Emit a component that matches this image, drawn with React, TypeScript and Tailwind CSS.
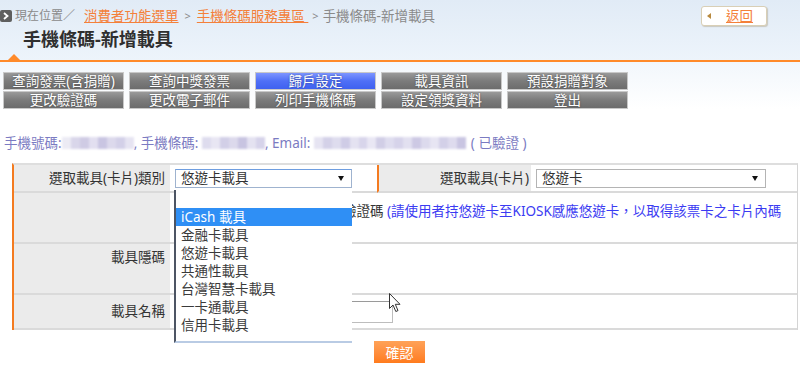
import React from "react";

const blur1 = ["bg-[#ecebf4]", "bg-[#d9d6ea]", "bg-[#cfcbe4]", "bg-[#e2dff0]", "bg-[#c9c5e2]", "bg-[#dcd9ec]", "bg-[#d3d0e8]", "bg-[#e6e4f2]"];
const blur2 = ["bg-[#dedcee]", "bg-[#e8e6f3]", "bg-[#d2cfe7]", "bg-[#dcd9ec]", "bg-[#c8c4e1]", "bg-[#e4e2f1]", "bg-[#d6d3ea]"];
const blur3 = ["bg-[#e6e4f2]", "bg-[#d4d1e8]", "bg-[#dedcee]", "bg-[#cfcce6]", "bg-[#e4e2f1]", "bg-[#d8d5eb]", "bg-[#e9e7f4]", "bg-[#d1cee6]", "bg-[#dfddef]", "bg-[#d6d3ea]", "bg-[#e2e0f0]", "bg-[#cdc9e4]", "bg-[#dcdaed]", "bg-[#e7e5f3]", "bg-[#d3d0e8]", "bg-[#dedbee]", "bg-[#c9c5e2]"];

function Blur({ cells, w }: { cells: string[]; w: string }) {
  return (
    <span className={`inline-flex h-[12px] blur-[1px] align-middle ${w}`}>
      {cells.map((c, i) => (
        <span key={i} className={`flex-1 h-full ${c}`} />
      ))}
    </span>
  );
}

const buttons = [
  "查詢發票(含捐贈)",
  "查詢中獎發票",
  "歸戶設定",
  "載具資訊",
  "預設捐贈對象",
  "更改驗證碼",
  "更改電子郵件",
  "列印手機條碼",
  "設定領獎資料",
  "登出",
];

const options = ["iCash 載具", "金融卡載具", "悠遊卡載具", "共通性載具", "台灣智慧卡載具", "一卡通載具", "信用卡載具"];

function Arrow() {
  return <span className="w-0 h-0 border-x-[3.5px] border-x-transparent border-t-[5px] border-t-[#111]" />;
}

export default function App() {
  return (
    <div className="relative w-[800px] h-[371px] overflow-hidden bg-white font-['Noto_Sans','Noto_Sans_CJK_TC',sans-serif] text-[13.5px] text-[#333]">
      {/* header */}
      <div className="relative h-[60px] bg-gradient-to-b from-[#e1ebf6] to-[#edf4fb]">
        <div className="flex items-center justify-between h-[26px] pt-[6px] pr-[33px]">
          <div className="flex items-center leading-[16px] text-[#8a8a8a]">
            <span className="flex items-center justify-center w-[12px] h-[12px] rounded-[2px] bg-[#5f5f5f] mr-[3px]">
              <svg width="6" height="8" viewBox="0 0 6 8">
                <path d="M1 1 L4.5 4 L1 7" stroke="#fff" strokeWidth="1.8" fill="none" />
              </svg>
            </span>
            <span className="text-[12px]">現在位置／</span>
            <span className="ml-[9px] text-[#f4803a] underline decoration-[#f4803a]">消費者功能選單</span>
            <span className="mx-[6px] text-[11px]">&gt;</span>
            <span className="text-[#f4803a] underline decoration-[#f4803a]">手機條碼服務專區&nbsp;</span>
            <span className="ml-[4px] mr-[4px] text-[11px]">&gt;</span>
            <span>手機條碼-新增載具</span>
          </div>
          <div className="flex items-center w-[66px] h-[20px] bg-white border border-[#d9cfb6] rounded-[3px] shadow-[1px_1px_1px_rgba(150,130,90,0.35)] pl-[5px]">
            <span className="w-0 h-0 border-y-[3px] border-y-transparent border-r-[4px] border-r-[#b8893e]" />
            <span className="ml-[15px] text-[#f4803a] underline decoration-[#f4803a] leading-[16px]">返回</span>
          </div>
        </div>
        <div className="pl-[23px] mt-[3px] text-[18px] font-bold leading-[20px] text-[#2f2f2f]">手機條碼-新增載具</div>
        <span className="absolute left-[8px] bottom-0 w-0 h-0 border-x-[6px] border-x-transparent border-b-[6px] border-b-[#ff8a2a]" />
      </div>
      <div className="h-[2px] bg-[#ff8a2a]" />

      {/* nav buttons */}
      <div className="bg-gradient-to-b from-[#f2f7fc] to-white pt-[10px] pl-[3px]">
        <div className="grid grid-cols-[repeat(5,121px)] gap-x-[5px] gap-y-[1px]">
          {buttons.map((b) => (
            <div
              key={b}
              className={`h-[18px] flex items-center justify-center text-white leading-[16px] border border-[#c8c8c8] [text-shadow:0_0_2px_rgba(0,0,0,0.45)] ${
                b === "歸戶設定"
                  ? "bg-gradient-to-b from-[#7d95ff] via-[#4f6ff6] to-[#3f61f0]"
                  : "bg-gradient-to-b from-[#9a9a9a] via-[#7b7b7b] to-[#6c6c6c]"
              }`}
            >
              {b}
            </div>
          ))}
        </div>
      </div>

      {/* info */}
      <div className="mt-[26px] pl-[4px] h-[16px] leading-[16px] flex items-center text-[#7b7bc2] whitespace-nowrap">
        <span>手機號碼:</span>
        <Blur cells={blur1} w="w-[72px]" />
        <span>, 手機條碼:&nbsp;</span>
        <Blur cells={blur2} w="w-[63px]" />
        <span>, Email:&nbsp;</span>
        <Blur cells={blur3} w="w-[152px]" />
        <span className="ml-[5px]">( 已驗證 )</span>
      </div>

      {/* table */}
      <div className="relative mt-[12px] ml-[12px] w-[786px] border-l-2 border-l-[#f47b20] border-t-2 border-t-[#dedede] border-r border-r-[#d4d4d4] grid grid-cols-[156px_207px_154px_1fr]">
        {/* row 1 */}
        <div className="h-[28px] bg-[#ebebeb] border-b-2 border-b-[#dadada] flex items-center justify-end pr-[5px]">選取載具(卡片)類別</div>
        <div className="h-[28px] border-b-2 border-b-[#dadada] flex items-center pl-[5px]">
          <div className="w-[177px] h-[19px] border border-[#9fb3cf] border-t-[#6f9ee0] flex items-center justify-between pl-[5px] pr-[7px] bg-white">
            <span className="leading-[16px]">悠遊卡載具</span>
            <Arrow />
          </div>
        </div>
        <div className="h-[28px] bg-[#ebebeb] border-l-2 border-l-[#f47b20] border-b-2 border-b-[#dadada] flex items-center justify-end pr-[2px]">選取載具(卡片)</div>
        <div className="h-[28px] border-b-2 border-b-[#dadada] flex items-center pl-[5px]">
          <div className="w-[230px] h-[19px] border border-[#b4b4b4] flex items-center justify-between pl-[5px] pr-[7px] bg-white">
            <span className="leading-[16px]">悠遊卡</span>
            <Arrow />
          </div>
        </div>

        {/* row 2 */}
        <div className="h-[51px] bg-[#ebebeb] border-b-2 border-b-[#dadada]" />
        <div className="col-span-3 h-[51px] border-b-2 border-b-[#dadada] pl-[173px] pt-[9px] leading-[18px] whitespace-nowrap">
          <span>驗證碼 </span>
          <span className="text-[#3b3bf2]">(請使用者持悠遊卡至KIOSK感應悠遊卡，以取得該票卡之卡片內碼</span>
        </div>

        {/* row 3 */}
        <div className="h-[51px] bg-[#ebebeb] border-b-2 border-b-[#dadada] flex items-start justify-end pr-[5px] pt-[5px] leading-[16px]">載具隱碼</div>
        <div className="col-span-3 h-[51px] border-b-2 border-b-[#dadada]" />

        {/* row 4 */}
        <div className="h-[35px] bg-[#ebebeb] border-b-2 border-b-[#dadada] flex items-center justify-end pr-[5px]">載具名稱</div>
        <div className="col-span-3 h-[35px] border-b-2 border-b-[#dadada] pl-[6px] pt-[6px]">
          <div className="w-[217px] h-[22px] border border-[#bdbdbd] border-t-[#9a9a9a]" />
        </div>

        {/* open dropdown list */}
        <div className="absolute left-[160px] top-[25px] w-[178px] h-[153px] bg-white border-l-2 border-l-[#4d5564] border-b-2 border-b-[#b9cbe4] pt-[18px]">
          {options.map((o, i) => (
            <div
              key={o}
              className={`h-[18px] pl-[5px] leading-[18px] ${i === 0 ? "bg-[#2f8ff5] text-white" : "text-[#3a3a3a]"}`}
            >
              {o}
            </div>
          ))}
        </div>

        {/* mouse cursor */}
        <svg className="absolute left-[375px] top-[128px]" width="13" height="20" viewBox="0 0 13 20">
          <path d="M0.5 0.5 L0.5 15.5 L4 12 L6.8 18.5 L9 17.6 L6.3 11.3 L11 11.3 Z" fill="#fff" stroke="#333" strokeWidth="1" strokeLinejoin="round" />
        </svg>
      </div>

      {/* confirm */}
      <div className="mt-[11px] ml-[374px] w-[51px] h-[22px] flex items-center justify-center text-white text-[14px] bg-gradient-to-b from-[#ffa257] to-[#ff7b1c]">確認</div>
    </div>
  );
}
